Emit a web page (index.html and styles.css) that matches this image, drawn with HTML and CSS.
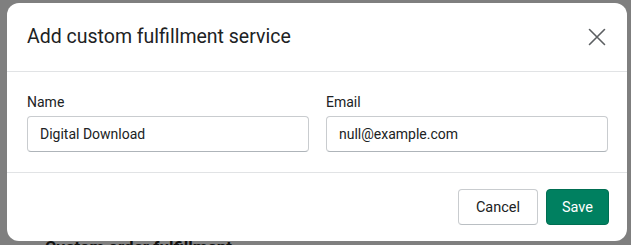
FILE: index.html
```html
<!DOCTYPE html>
<html>
<head>
  <meta charset="UTF-8">
  <title>Add custom fulfillment service</title>
  <link rel="stylesheet" href="styles.css">
</head>
<body>
  <div class="page">
    <div class="page-side">o</div>
    <h2 class="page-title">Custom order fulfillment</h2>
  </div>

  <div class="modal">
    <div class="modal-header">
      <div class="modal-title">Add custom fulfillment service</div>
      <button class="close-btn" title="Close">
        <svg class="icon" fill="none" stroke="currentColor" viewBox="0 0 20 20">
          <path stroke-linecap="round" stroke-width="1.6" d="M2.5 2.5l15 15M17.5 2.5l-15 15"></path>
        </svg>
      </button>
    </div>

    <div class="modal-body">
      <div class="field">
        <label class="field-label" for="name">Name</label>
        <input class="field-input" id="name" type="text" value="Digital Download">
      </div>
      <div class="field">
        <label class="field-label" for="email">Email</label>
        <input class="field-input" id="email" type="text" value="null@example.com">
      </div>
    </div>

    <div class="modal-footer">
      <button class="btn secondary">Cancel</button>
      <button class="btn primary">Save</button>
    </div>
  </div>
</body>
</html>
```

FILE: styles.css
```css
* {
  margin: 0;
  padding: 0;
  box-sizing: border-box;
}

body {
  font-family: Roboto, "Liberation Sans", sans-serif;
  background: #7f7f7f;
  color: #202223;
  overflow: hidden;
  height: 245px;
  position: relative;
}

.page {
  height: 245px;
  padding: 235px 0 0 45px;
  color: #111;
  overflow: hidden;
}

.page-title {
  font-size: 17px;
  font-weight: 700;
  line-height: 24px;
}

.page-side {
  position: absolute;
  top: 108px;
  left: 619px;
  font-size: 14px;
  color: #111;
}

.modal {
  position: absolute;
  top: 3px;
  left: 7px;
  width: 620px;
  background: #fff;
  border-radius: 12px;
  overflow: hidden;
}

.modal-header {
  height: 69px;
  padding: 0 20px;
  display: flex;
  align-items: center;
  justify-content: space-between;
  border-bottom: 1px solid #e1e3e5;
}

.modal-title {
  font-size: 19.5px;
  line-height: 28px;
  font-weight: 400;
}

.close-btn {
  width: 20px;
  height: 20px;
  background: none;
  border: none;
  color: #5c5f62;
  cursor: pointer;
  display: flex;
  align-items: center;
  justify-content: center;
}

.icon {
  width: 20px;
  height: 20px;
}

.modal-body {
  padding: 20px 19px 20px 20px;
  display: grid;
  grid-template-columns: 1fr 1fr;
  gap: 17px;
  border-bottom: 1px solid #e1e3e5;
}

.field {
  display: flex;
  flex-direction: column;
  gap: 4px;
}

.field-label {
  font-size: 14px;
  line-height: 20px;
}

.field-input {
  height: 36px;
  padding: 0 12px;
  font-family: inherit;
  font-size: 14px;
  color: #202223;
  border: 1px solid #c9cccf;
  border-bottom-color: #aeb4b9;
  border-radius: 4px;
  outline: none;
}

.modal-footer {
  padding: 16px 18px 16px 20px;
  display: flex;
  justify-content: flex-end;
  gap: 8px;
}

.btn {
  height: 36px;
  padding: 0 16px;
  font-family: inherit;
  font-size: 14.5px;
  font-weight: 400;
  border-radius: 4px;
  cursor: pointer;
}

.btn.secondary {
  min-width: 80px;
  background: #fff;
  color: #202223;
  border: 1px solid #c9cccf;
  border-bottom-color: #babfc3;
}

.btn.primary {
  min-width: 62px;
  padding: 0 15px;
  background: #008060;
  color: #fff;
  border: 1px solid #006e52;
}
```
